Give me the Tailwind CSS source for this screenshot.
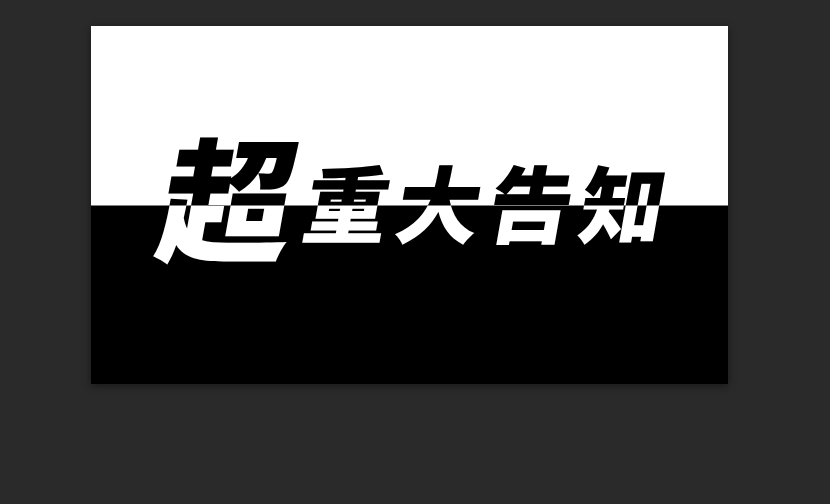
<!DOCTYPE html>
<html lang="zh-CN">
<head>
  <meta charset="UTF-8" />
  <title>超重大告知</title>
  <script src="https://cdn.jsdelivr.net/npm/@tailwindcss/browser@4"></script>
</head>
<body class="h-[504px] w-[830px] overflow-hidden bg-[#2a2a2a] pt-[26px] pl-[91px]">
  <div class="relative isolate flex h-[358px] w-[637px] flex-col shadow-[0_2px_8px_rgba(0,0,0,0.45)]">
    <div class="h-[179px] bg-white"></div>
    <div class="h-px bg-[#808080]"></div>
    <div class="flex-1 bg-black"></div>

    <!-- text flips colour where it crosses the split -->
    <div class="absolute top-[101px] left-[72px] flex items-end font-['Noto_Sans_CJK_SC',sans-serif] font-black leading-none text-white mix-blend-difference">
      <span class="block skew-x-[-10deg] text-[134px]">超</span>
      <span class="mb-[18px] ml-[9px] block skew-x-[-10deg] text-[84px] tracking-[8px]">重大告知</span>
    </div>
  </div>
</body>
</html>
